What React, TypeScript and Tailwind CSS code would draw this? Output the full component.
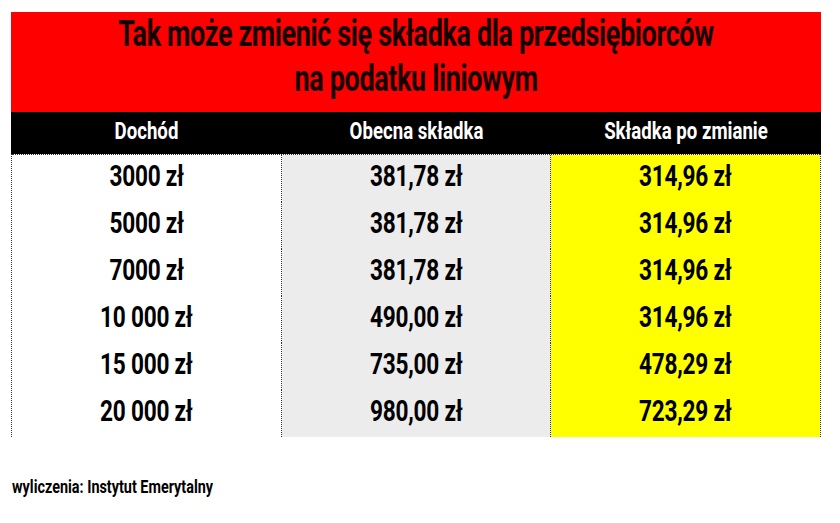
const ROWS: [string, string, string][] = [
  ["3000 zł", "381,78 zł", "314,96 zł"],
  ["5000 zł", "381,78 zł", "314,96 zł"],
  ["7000 zł", "381,78 zł", "314,96 zł"],
  ["10 000 zł", "490,00 zł", "314,96 zł"],
  ["15 000 zł", "735,00 zł", "478,29 zł"],
  ["20 000 zł", "980,00 zł", "723,29 zł"],
];

// No condensed face is installed, so Roboto bold is squeezed horizontally.
const FONT = "font-['Roboto','Liberation_Sans',sans-serif]";

function Cell({ text, bg, line = true }: { text: string; bg: string; line?: boolean }) {
  return (
    <div
      className={`flex items-center justify-center pb-[3px] ${bg} ${line ? "border-r border-dotted border-[#333]" : ""}`}
    >
      <span className="inline-block whitespace-nowrap scale-x-[0.78] tracking-[-0.3px]">{text}</span>
    </div>
  );
}

export default function App() {
  return (
    <div className={`w-[840px] h-[523px] overflow-hidden bg-white pt-[12px] pl-[11px] ${FONT} font-bold text-black`}>
      <div className="w-[810px]">
        <div className="h-[100px] bg-[#ff0000] flex flex-col items-center text-[36px] leading-[45px] text-[#140000]">
          <span className="inline-block whitespace-nowrap scale-x-[0.75] tracking-[-0.5px]">
            Tak może zmienić się składka dla przedsiębiorców
          </span>
          <span className="inline-block whitespace-nowrap scale-x-[0.75] tracking-[-0.5px]">
            na podatku liniowym
          </span>
        </div>
        <div className="grid grid-cols-[271px_269px_270px] h-[42px] bg-black text-white text-[23px] items-center text-center pb-[1px]">
          <span className="inline-block whitespace-nowrap scale-x-[0.81]">Dochód</span>
          <span className="inline-block whitespace-nowrap scale-x-[0.81]">Obecna składka</span>
          <span className="inline-block whitespace-nowrap scale-x-[0.81]">Składka po zmianie</span>
        </div>
        <div className="border-l border-r border-b border-dotted border-[#333]">
          {ROWS.map(([a, b, c], i) => (
            <div
              key={i}
              className="grid grid-cols-[270px_269px_269px] h-[47px] border-t border-dotted border-[#333] text-[29px]"
            >
              <Cell text={a} bg="bg-white" />
              <Cell text={b} bg="bg-[#ececec]" />
              <Cell text={c} bg="bg-[#ffff00]" line={false} />
            </div>
          ))}
        </div>
      </div>
      <p className="mt-[36px] ml-[1px] text-[18px] whitespace-nowrap origin-left scale-x-[0.8]">
        wyliczenia: Instytut Emerytalny
      </p>
    </div>
  );
}
